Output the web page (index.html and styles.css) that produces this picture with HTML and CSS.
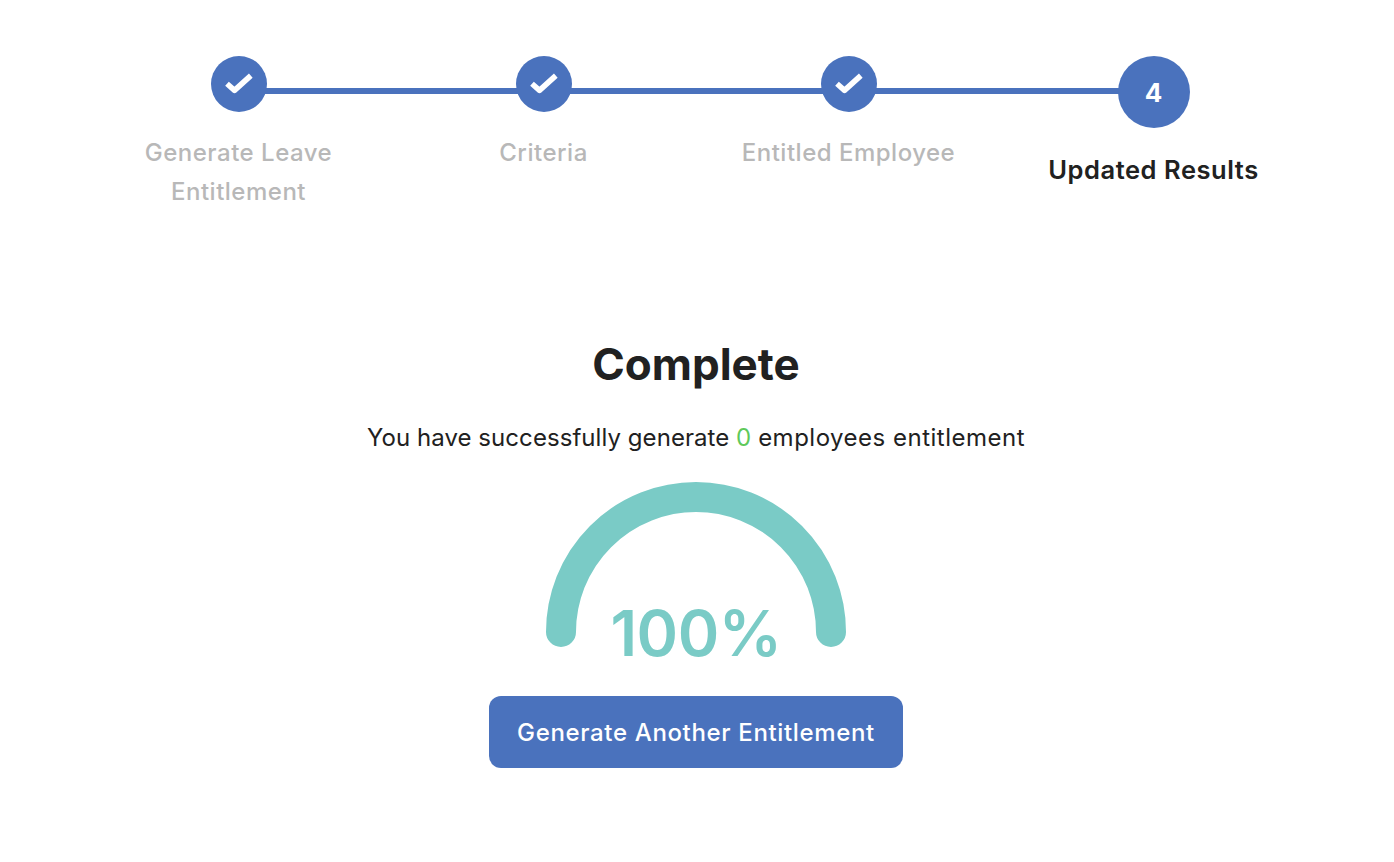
FILE: index.html
```html
<!DOCTYPE html>
<html lang="en">

<head>
    <meta charset="UTF-8">
    <meta name="viewport" content="width=device-width, initial-scale=1.0">
    <title>Generate Leave Entitlement</title>
    <link rel="stylesheet" href="styles.css">
</head>

<body>
    <div class="container">
        <!-- Steps -->
        <div class="steps">
            <div class="step done">
                <div class="circle">
                    <svg class="check" viewBox="0 0 56 56"><path d="M16 27.8L23.5 34.4L39.8 19.6"/></svg>
                </div>
                <div class="label">Generate Leave Entitlement</div>
            </div>
            <div class="step done">
                <div class="circle">
                    <svg class="check" viewBox="0 0 56 56"><path d="M16 27.8L23.5 34.4L39.8 19.6"/></svg>
                </div>
                <div class="label">Criteria</div>
            </div>
            <div class="step done">
                <div class="circle">
                    <svg class="check" viewBox="0 0 56 56"><path d="M16 27.8L23.5 34.4L39.8 19.6"/></svg>
                </div>
                <div class="label">Entitled Employee</div>
            </div>
            <div class="step active">
                <div class="circle">4</div>
                <div class="label">Updated Results</div>
            </div>
        </div>

        <!-- Result -->
        <div class="result">
            <h1>Complete</h1>
            <p class="message">You have successfully generate <span class="count">0</span> <span class="rest">employees entitlement</span></p>
            <div class="gauge">
                <svg viewBox="0 0 300 165"><path d="M15 150A135 135 0 0 1 285 150"/></svg>
                <div class="percent">100%</div>
            </div>
            <button>Generate Another Entitlement</button>
        </div>
    </div>
</body>

</html>
```

FILE: styles.css
```css
body {
    margin: 0;
    font-family: Inter, Arial, sans-serif;
    background-color: #fff;
    color: #212121;
}

.container {
    width: 1220px;
    margin-left: 86px;
    padding-top: 56px;
}

.steps {
    display: grid;
    grid-template-columns: repeat(4, 1fr);
}

.step {
    position: relative;
    display: flex;
    flex-direction: column;
    align-items: center;
    text-align: center;
}

.step:not(:last-child)::before {
    content: "";
    position: absolute;
    top: 32px;
    left: 50%;
    width: 100%;
    height: 6px;
    background: #4a72bd;
}

.circle {
    position: relative;
    display: flex;
    align-items: center;
    justify-content: center;
    width: 56px;
    height: 56px;
    border-radius: 50%;
    background: #4a72bd;
    color: white;
    font-size: 26px;
    font-weight: 700;
}

.check {
    width: 56px;
    height: 56px;
    fill: none;
    stroke: white;
    stroke-width: 5.5;
    stroke-linejoin: round;
}

.active .circle {
    width: 72px;
    height: 72px;
}

.label {
    width: 230px;
    margin-top: 21px;
    font-size: 24px;
    line-height: 39px;
    font-weight: 500;
    letter-spacing: 0.5px;
    color: #b8b8b8;
}

.active .label {
    width: 260px;
    margin-top: 22px;
    font-size: 25.5px;
    font-weight: 600;
    letter-spacing: 0.55px;
    color: #212121;
}

.result {
    display: flex;
    flex-direction: column;
    align-items: center;
    margin-top: 125px;
}

h1 {
    margin: 0;
    font-size: 44px;
    line-height: 56px;
    font-weight: 700;
}

.message {
    margin: 30px 0 0;
    font-size: 24px;
    line-height: 32px;
    letter-spacing: 0.06px;
}

.count {
    color: #5fc95b;
}

.rest {
    letter-spacing: 0.5px;
}

.gauge {
    position: relative;
    width: 300px;
    height: 165px;
    margin-top: 28px;
}

.gauge svg {
    display: block;
    width: 300px;
    height: 165px;
    fill: none;
    stroke: #7acbc6;
    stroke-width: 30;
    stroke-linecap: round;
}

.percent {
    position: absolute;
    top: 115px;
    left: 0;
    width: 100%;
    text-align: center;
    font-size: 63px;
    line-height: 72px;
    font-weight: 600;
    letter-spacing: -0.5px;
    color: #7acbc6;
}

button {
    width: 414px;
    height: 72px;
    margin-top: 49px;
    background-color: #4a72bd;
    color: white;
    border: none;
    border-radius: 12px;
    font-family: inherit;
    font-size: 24px;
    font-weight: 500;
    letter-spacing: 0.65px;
}
```
